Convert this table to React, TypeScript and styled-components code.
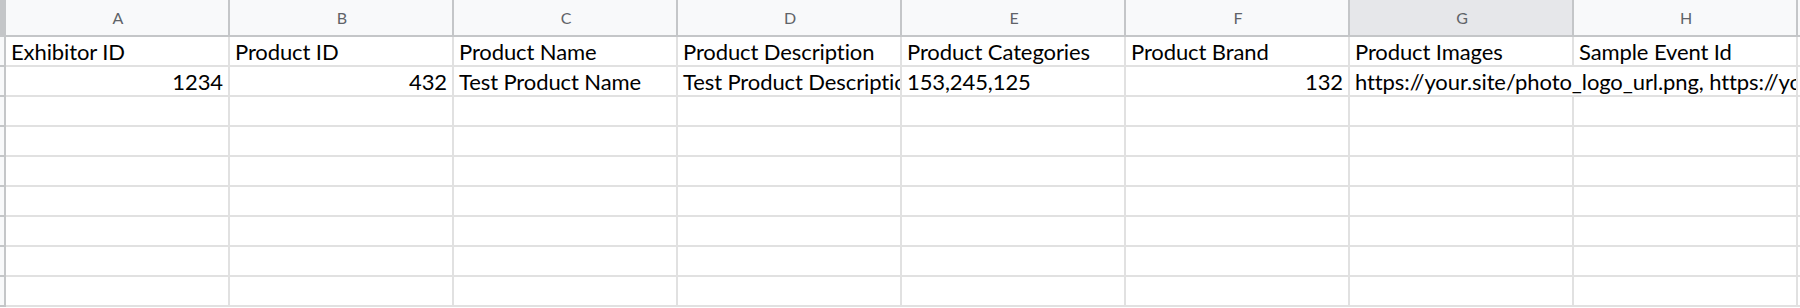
import * as React from 'react'
import styled, { createGlobalStyle } from 'styled-components'

const GlobalStyle = createGlobalStyle`
  html, body {
    margin: 0;
    padding: 0;
    background: #ffffff;
  }
`

const colors = {
  headerBg: '#f8f9fa',
  headerSelected: '#e6e7ea',
  headerLine: '#c4c6c8',
  gridLine: '#e1e1e1',
  letter: '#5f6368',
  text: '#000000',
}

const COLUMN_WIDTH = 224
const COLUMNS = ['A', 'B', 'C', 'D', 'E', 'F', 'G', 'H', 'I']
const EMPTY_ROWS = 7

const Sheet = styled.div`
  display: grid;
  grid-template-columns: 6px repeat(${COLUMNS.length}, ${COLUMN_WIDTH}px);
  grid-template-rows: 37px;
  grid-auto-rows: 30px;
  width: 1800px;
  height: 308px;
  overflow: hidden;
  background: #ffffff;
  font-family: Lato, 'Open Sans', sans-serif;
`

const Corner = styled.div`
  box-sizing: border-box;
  background: #c4c6c8;
  border-bottom: 2px solid ${colors.headerLine};
`

const ColumnHeader = styled.div<{ $selected?: boolean }>`
  box-sizing: border-box;
  display: flex;
  align-items: center;
  justify-content: center;
  background: ${(p) => (p.$selected ? colors.headerSelected : colors.headerBg)};
  border-right: 2px solid ${colors.headerLine};
  border-bottom: 2px solid ${colors.headerLine};
  color: ${colors.letter};
  font-size: 16px;
  padding-left: 2px;
`

const RowHeader = styled.div`
  box-sizing: border-box;
  background: ${colors.headerBg};
  border-right: 2px solid ${colors.headerLine};
  border-bottom: 2px solid ${colors.headerLine};
`

const Cell = styled.div<{ $align?: 'left' | 'right'; $span?: number }>`
  box-sizing: border-box;
  display: flex;
  align-items: center;
  justify-content: ${(p) => (p.$align === 'right' ? 'flex-end' : 'flex-start')};
  grid-column: span ${(p) => p.$span ?? 1};
  padding: 0 5px 0 5px;
  border-right: 2px solid ${colors.gridLine};
  border-bottom: 2px solid ${colors.gridLine};
  color: ${colors.text};
  font-size: 22px;
  letter-spacing: -0.1px;
  white-space: nowrap;
  overflow: hidden;
`

interface CellData {
  value: string
  align?: 'left' | 'right'
  span?: number
}

const rows: CellData[][] = [
  [
    { value: 'Exhibitor ID' },
    { value: 'Product ID' },
    { value: 'Product Name' },
    { value: 'Product Description' },
    { value: 'Product Categories' },
    { value: 'Product Brand' },
    { value: 'Product Images' },
    { value: 'Sample Event Id' },
    { value: '' },
  ],
  [
    { value: '1234', align: 'right' },
    { value: '432', align: 'right' },
    { value: 'Test Product Name' },
    { value: 'Test Product Description' },
    { value: '153,245,125' },
    { value: '132', align: 'right' },
    // long text runs on over the empty cell beside it
    {
      value: 'https://your.site/photo_logo_url.png, https://your.site/photo_banner_url.png',
      span: 2,
    },
    { value: '' },
  ],
  ...Array.from({ length: EMPTY_ROWS }, () => COLUMNS.map(() => ({ value: '' }))),
]

const App: React.FC = () => (
  <>
    <GlobalStyle />
    <Sheet>
      <Corner />
      {COLUMNS.map((letter) => (
        <ColumnHeader key={letter} $selected={letter === 'G'}>
          {letter}
        </ColumnHeader>
      ))}
      {rows.map((row, r) => (
        <React.Fragment key={r}>
          <RowHeader />
          {row.map((cell, c) => (
            <Cell key={c} $align={cell.align} $span={cell.span}>
              {cell.value}
            </Cell>
          ))}
        </React.Fragment>
      ))}
    </Sheet>
  </>
)

export default App
